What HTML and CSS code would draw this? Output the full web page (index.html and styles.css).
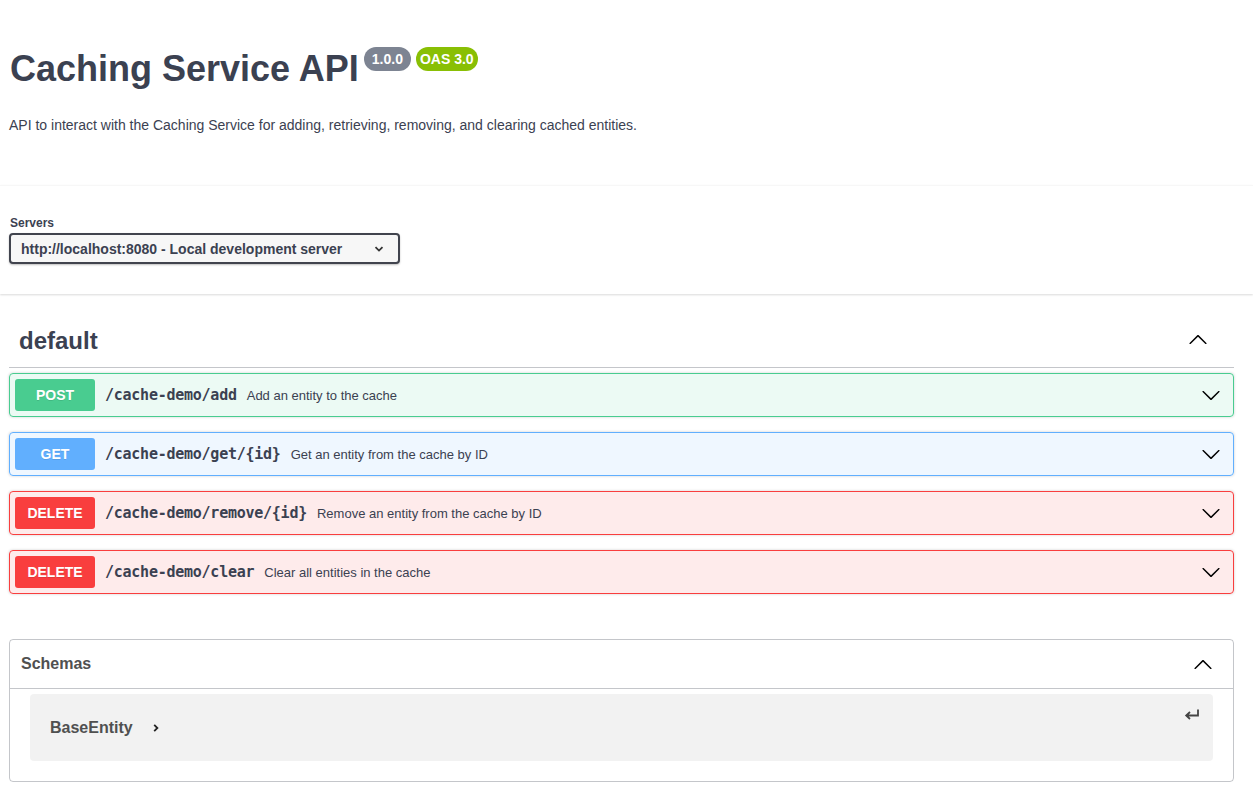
FILE: index.html
```html
<!DOCTYPE html>
<html>
<head>
<meta charset="utf-8">
<link rel="stylesheet" href="styles.css">
</head>
<body>
<div class="page">
  <div class="info">
    <div class="title-row">
      <h2 class="title">Caching Service API</h2>
      <span class="badge badge-version">1.0.0</span>
      <span class="badge badge-oas">OAS 3.0</span>
    </div>
    <p class="description">API to interact with the Caching Service for adding, retrieving, removing, and clearing cached entities.</p>
  </div>
</div>

<div class="scheme-container">
  <div class="page">
    <div class="servers-label">Servers</div>
    <div class="select">
      <span>http://localhost:8080 - Local development server</span>
      <svg class="select-arrow" width="12" height="8" viewBox="0 0 12 8"><path d="M2.5 2.2 L6 5.6 L9.5 2.2" fill="none" stroke="#333" stroke-width="1.8"/></svg>
    </div>
  </div>
</div>

<div class="page">
  <div class="tag-section">
    <h3 class="tag">
      <span>default</span>
      <svg class="arrow" width="20" height="20" viewBox="0 0 20 20"><path d="M17.418 14.908c.272.268.709.268.979 0s.271-.701 0-.969l-7.908-7.83c-.27-.268-.707-.268-.979 0l-7.908 7.83c-.27.268-.27.701 0 .969.271.268.709.268.979 0L10 7.767l7.418 7.141z"/></svg>
    </h3>

    <div class="opblock op-post">
      <span class="method">POST</span>
      <span class="path">/cache-demo/add</span>
      <span class="summary">Add an entity to the cache</span>
      <svg class="arrow op-arrow" width="20" height="20" viewBox="0 0 20 20"><path d="M17.418 6.109c.272-.268.709-.268.979 0s.271.701 0 .969l-7.908 7.83c-.27.268-.707.268-.979 0l-7.908-7.830c-.27-.268-.27-.701 0-.969.271-.268.709-.268.979 0L10 13.25l7.418-7.141z"/></svg>
    </div>
    <div class="opblock op-get">
      <span class="method">GET</span>
      <span class="path">/cache-demo/get/{id}</span>
      <span class="summary">Get an entity from the cache by ID</span>
      <svg class="arrow op-arrow" width="20" height="20" viewBox="0 0 20 20"><path d="M17.418 6.109c.272-.268.709-.268.979 0s.271.701 0 .969l-7.908 7.83c-.27.268-.707.268-.979 0l-7.908-7.83c-.27-.268-.27-.701 0-.969.271-.268.709-.268.979 0L10 13.25l7.418-7.141z"/></svg>
    </div>
    <div class="opblock op-delete">
      <span class="method">DELETE</span>
      <span class="path">/cache-demo/remove/{id}</span>
      <span class="summary">Remove an entity from the cache by ID</span>
      <svg class="arrow op-arrow" width="20" height="20" viewBox="0 0 20 20"><path d="M17.418 6.109c.272-.268.709-.268.979 0s.271.701 0 .969l-7.908 7.83c-.27.268-.707.268-.979 0l-7.908-7.83c-.27-.268-.27-.701 0-.969.271-.268.709-.268.979 0L10 13.25l7.418-7.141z"/></svg>
    </div>
    <div class="opblock op-delete">
      <span class="method">DELETE</span>
      <span class="path">/cache-demo/clear</span>
      <span class="summary">Clear all entities in the cache</span>
      <svg class="arrow op-arrow" width="20" height="20" viewBox="0 0 20 20"><path d="M17.418 6.109c.272-.268.709-.268.979 0s.271.701 0 .969l-7.908 7.83c-.27.268-.707.268-.979 0l-7.908-7.83c-.27-.268-.27-.701 0-.969.271-.268.709-.268.979 0L10 13.25l7.418-7.141z"/></svg>
    </div>
  </div>

  <div class="models">
    <h4 class="models-header">
      <span>Schemas</span>
      <svg class="arrow" width="20" height="20" viewBox="0 0 20 20"><path d="M17.418 14.908c.272.268.709.268.979 0s.271-.701 0-.969l-7.908-7.83c-.27-.268-.707-.268-.979 0l-7.908 7.83c-.27.268-.27.701 0 .969.271.268.709.268.979 0L10 7.767l7.418 7.141z"/></svg>
    </h4>
    <div class="model-container">
      <span class="model-name">BaseEntity</span>
      <svg class="model-toggle" width="10" height="10" viewBox="0 0 10 10"><path d="M3.2 1.8 L6.4 5 L3.2 8.2" fill="none" stroke="#222" stroke-width="1.8"/></svg>
      <svg class="model-return" width="18" height="14" viewBox="0 0 18 14"><path d="M15 1.5 V7.5 H3.5 M7 4 L3.2 7.5 L7 11" fill="none" stroke="#444" stroke-width="1.8"/></svg>
    </div>
  </div>
</div>
</body>
</html>
```

FILE: styles.css
```css
* { box-sizing: border-box; }
html, body { margin: 0; padding: 0; background: #fff; }
body {
  font-family: "Liberation Sans", Arial, sans-serif;
  color: #3b4151;
}
.page {
  padding: 0 19px 0 9px;
}
.info {
  padding-top: 46px;
  padding-bottom: 51px;
}
.title-row {
  display: flex;
  align-items: flex-start;
}
.title {
  margin: 0;
  font-size: 36px;
  line-height: 46px;
  font-weight: 700;
  color: #3b4151;
  padding-left: 1px;
}
.badge {
  display: inline-block;
  font-size: 14px;
  font-weight: 700;
  color: #fff;
  line-height: 18px;
  padding: 3px 6px;
  border-radius: 12px;
  margin-top: 1px;
}
.badge-version { background: #7d8492; margin-left: 5px; padding: 3px 8px; }
.badge-oas { background: #89bf04; margin-left: 5px; padding: 3px 4px 3px 4px; }
.description {
  margin: 24px 0 0 0;
  font-size: 14px;
  line-height: 18px;
}

.scheme-container {
  background: #fff;
  border-top: 1px solid #f7f7f7;
  box-shadow: 0 1px 2px 0 rgba(0,0,0,.15);
  padding: 29px 0 30px 0;
  margin-bottom: 21px;
}
.servers-label {
  font-size: 12px;
  font-weight: 700;
  line-height: 16px;
  padding-left: 1px;
  margin-bottom: 2px;
}
.select {
  width: 391px;
  height: 31px;
  border: 2px solid #41444e;
  border-radius: 4px;
  background: #f7f7f7;
  box-shadow: 0 1px 2px 0 rgba(0,0,0,.25);
  display: flex;
  align-items: center;
  justify-content: space-between;
  padding: 0 13px 0 10px;
  font-size: 14px;
  font-weight: 700;
  color: #3b4151;
}
.select-arrow { display: block; }

.tag {
  margin: 0 0 5px 0;
  display: flex;
  align-items: center;
  justify-content: space-between;
  padding: 10px 26px 10px 10px;
  border-bottom: 1px solid rgba(59,65,81,.3);
  font-size: 24px;
  line-height: 32px;
  font-weight: 700;
  color: #3b4151;
}
.tag .arrow { margin-top: -4px; }
.arrow { display: block; fill: #000; }

.opblock {
  display: flex;
  align-items: center;
  border: 1px solid;
  border-radius: 4px;
  padding: 5px;
  margin-bottom: 15px;
  box-shadow: 0 0 3px rgba(0,0,0,.19);
}
.method {
  width: 80px;
  height: 32px;
  border-radius: 3px;
  color: #fff;
  font-size: 14px;
  font-weight: 700;
  display: flex;
  align-items: center;
  justify-content: center;
  text-shadow: 0 1px 0 rgba(0,0,0,.1);
}
.path {
  font-family: "DejaVu Sans Mono", monospace;
  font-weight: 700;
  font-size: 15px;
  letter-spacing: -0.25px;
  color: #3b4151;
  padding: 0 10px;
}
.summary {
  font-size: 13px;
  color: #3b4151;
  flex: 1;
}
.op-arrow { margin-right: 7px; }
.op-post { background: rgba(73,204,144,.1); border-color: #49cc90; }
.op-post .method { background: #49cc90; }
.op-get { background: rgba(97,175,254,.1); border-color: #61affe; }
.op-get .method { background: #61affe; }
.op-delete { background: rgba(249,62,62,.1); border-color: #f93e3e; }
.op-delete .method { background: #f93e3e; }

.models {
  margin-top: 45px;
  border: 1px solid rgba(59,65,81,.3);
  border-radius: 4px;
}
.models-header {
  margin: 0;
  display: flex;
  align-items: center;
  justify-content: space-between;
  padding: 10px 20px 10px 11px;
  height: 49px;
  border-bottom: 1px solid rgba(59,65,81,.3);
  font-size: 16px;
  font-weight: 700;
  color: #505050;
}
.model-container {
  margin: 5px 20px 20px 20px;
  background: rgba(0,0,0,.05);
  border-radius: 4px;
  padding: 20px;
  display: flex;
  align-items: center;
  position: relative;
  height: 67px;
}
.model-name {
  font-size: 16px;
  font-weight: 700;
  color: #505050;
  line-height: 26px;
}
.model-toggle { margin-left: 18px; display: block; }
.model-return {
  position: absolute;
  right: 12px;
  top: 14px;
}
```
